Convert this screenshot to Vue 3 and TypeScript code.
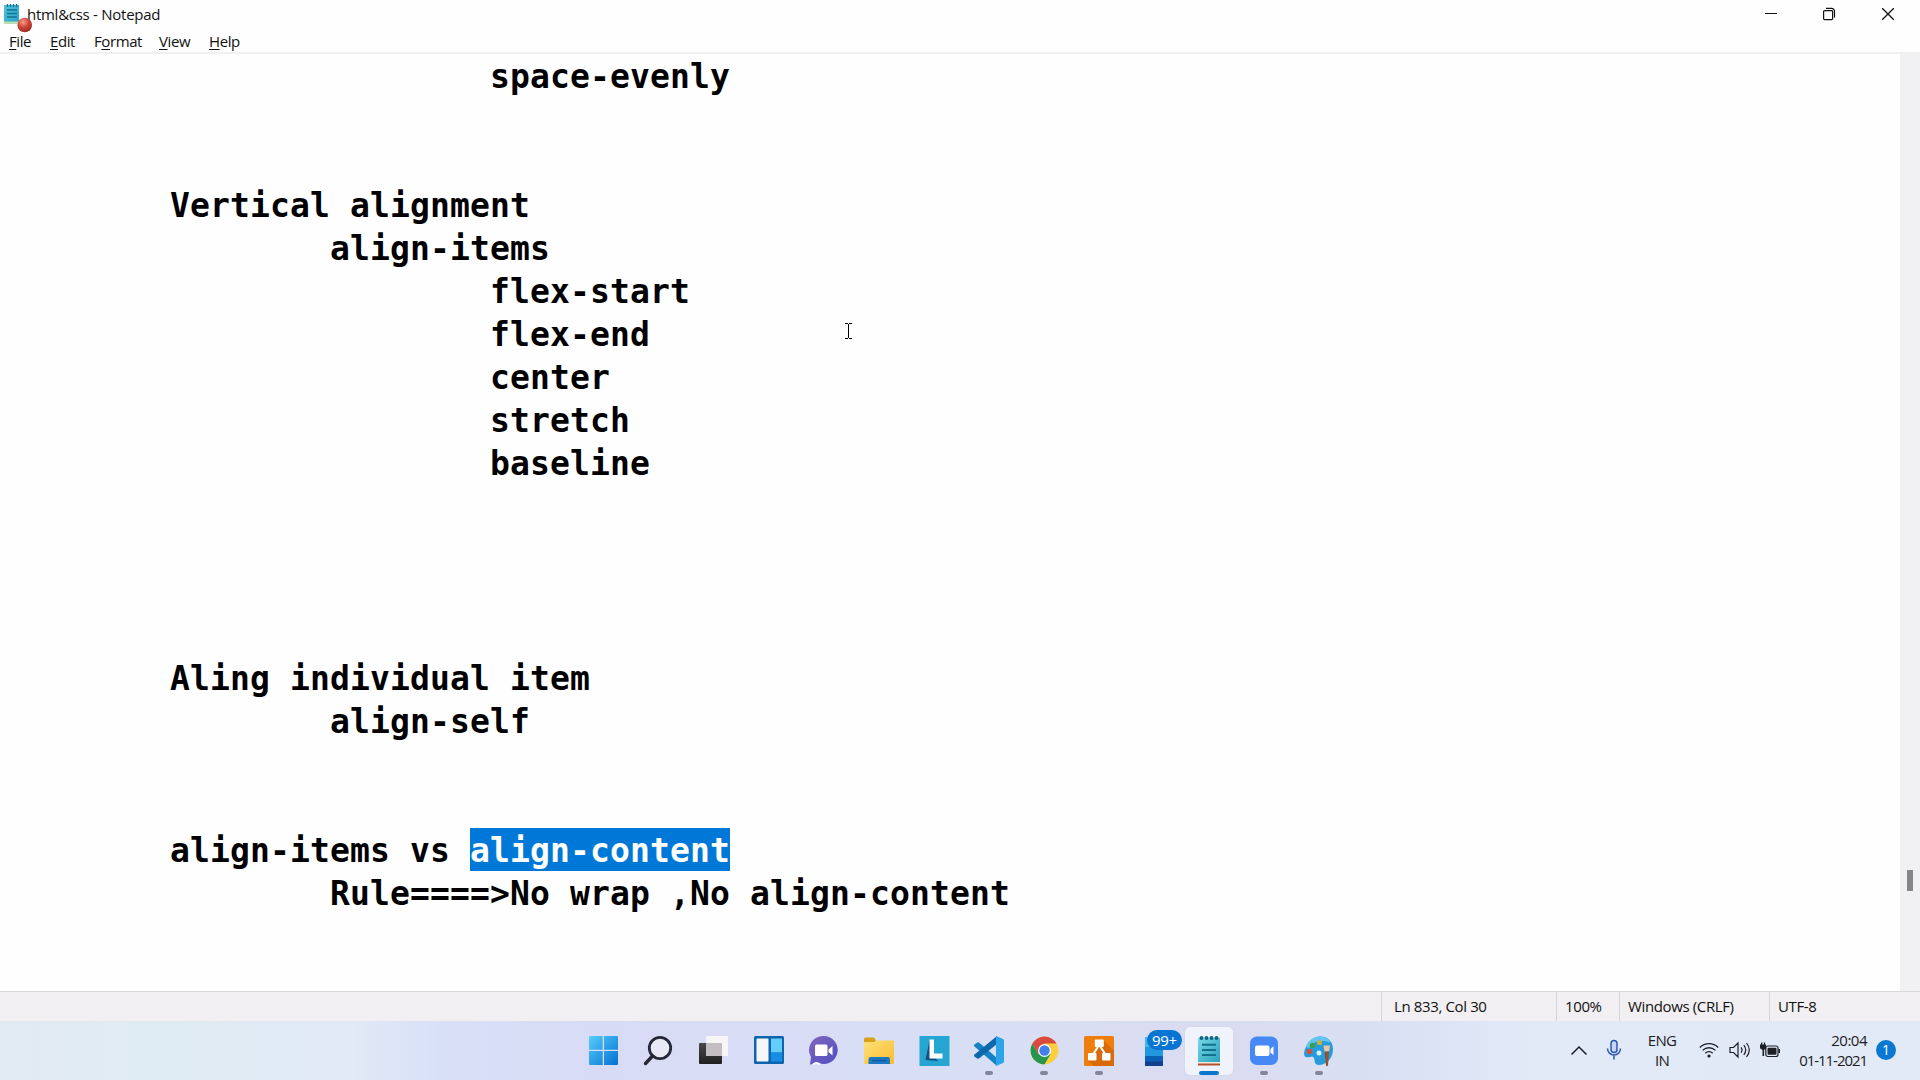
<script setup lang="ts">
interface MenuEntry { key: string; rest: string; pre?: string; width: number }
interface Line { tabs: number; text: string; selected?: string }

const menu: MenuEntry[] = [
  { key: 'F', rest: 'ile', width: 41 },
  { key: 'E', rest: 'dit', width: 44 },
  { pre: 'F', key: 'o', rest: 'rmat', width: 65 },
  { key: 'V', rest: 'iew', width: 50 },
  { key: 'H', rest: 'elp', width: 50 },
]

const blank: Line = { tabs: 0, text: '' }
const lines: Line[] = [
  { tabs: 3, text: 'space-evenly' },
  blank,
  blank,
  { tabs: 1, text: 'Vertical alignment' },
  { tabs: 2, text: 'align-items' },
  { tabs: 3, text: 'flex-start' },
  { tabs: 3, text: 'flex-end' },
  { tabs: 3, text: 'center' },
  { tabs: 3, text: 'stretch' },
  { tabs: 3, text: 'baseline' },
  blank,
  blank,
  blank,
  blank,
  { tabs: 1, text: 'Aling individual item' },
  { tabs: 2, text: 'align-self' },
  blank,
  blank,
  { tabs: 1, text: 'align-items vs ', selected: 'align-content' },
  { tabs: 2, text: 'Rule====>No wrap ,No align-content' },
]
const indent = (n: number) => '\t'.repeat(n)
</script>

<template>
  <div class="screen">
    <header class="titlebar">
      <svg class="app-icon" width="33" height="33" viewBox="0 0 33 33">
        <defs>
          <linearGradient id="pad" x1="0" y1="0" x2="1" y2="1">
            <stop offset="0" stop-color="#4fc0dc" /><stop offset="1" stop-color="#2ba3c6" />
          </linearGradient>
          <radialGradient id="ball" cx=".4" cy=".3" r=".7">
            <stop offset="0" stop-color="#f6a08e" /><stop offset=".5" stop-color="#d4493a" /><stop offset="1" stop-color="#9c2c22" />
          </radialGradient>
        </defs>
        <rect x="4" y="5" width="15" height="19" fill="url(#pad)" />
        <rect x="4" y="21.500" width="15" height="2.500" fill="#b9dfb0" />
        <path d="M7.500 4v3M10.500 4v3M13.500 4v3M16.500 4v3" stroke="#176f8b" stroke-width="1.300" />
        <path d="M7 10h10M7 13.500h10M7 17h10" stroke="#12738f" stroke-width="1.400" />
        <circle cx="24.700" cy="25" r="7.300" fill="url(#ball)" />
      </svg>
      <span class="title">html&amp;css - Notepad</span>
      <div class="controls">
        <svg width="14" height="14" viewBox="0 0 14 14"><path d="M2 6.500h12" stroke="#111" stroke-width="1" /></svg>
        <svg width="14" height="14" viewBox="0 0 14 14" fill="none" stroke="#111" stroke-width="1.200"><rect x="1.600" y="3.600" width="9" height="9" rx="1" /><path d="M4 1.400h5.500a3 3 0 0 1 3 3V10.500" /></svg>
        <svg width="14" height="14" viewBox="0 0 14 14"><path d="M1.200 1.200l11.600 11.600M12.800 1.200L1.200 12.800" stroke="#111" stroke-width="1.300" /></svg>
      </div>
    </header>
    <nav class="menubar">
      <span v-for="m in menu" :key="m.key" class="menu-item" :style="{ width: m.width + 'px' }">{{ m.pre }}<u>{{ m.key }}</u>{{ m.rest }}</span>
    </nav>
    <main class="editor">
      <div class="text">
        <div v-for="(l, i) in lines" :key="i" class="line">{{ indent(l.tabs) }}{{ l.text }}<span v-if="l.selected" class="selected">{{ l.selected }}</span></div>
      </div>
      <div class="scrollbar"><i class="thumb"></i></div>
      <svg class="caret" width="14" height="18" viewBox="0 0 14 18" shape-rendering="crispEdges"><path d="M3 1.500h3M7 1.500h3M6.500 2v14M3 16.500h3M7 16.500h3" fill="none" stroke="#000" stroke-width="1" /></svg>
    </main>
    <footer class="statusbar">
      <span class="cell position">Ln 833, Col 30</span>
      <span class="cell zoom">100%</span>
      <span class="cell eol">Windows (CRLF)</span>
      <span class="cell encoding">UTF-8</span>
    </footer>
    <div class="taskbar">
      <div class="apps">
        <div class="app">
          <svg viewBox="0 0 55 58"><defs><linearGradient id="win" x1="0" y1="0" x2="1" y2="1"><stop offset="0" stop-color="#56cdfb" /><stop offset="1" stop-color="#0471d2" /></linearGradient></defs>
            <path d="M14 15h12.700v13.700H13V16q0-1 1-1zM28 15h13q1 0 1 1v12.700H28zM13 30h13.700v14H14q-1 0-1-1zM28 30h14v13q0 1-1 1H28z" fill="url(#win)" /></svg>
        </div>
        <div class="app">
          <svg viewBox="0 0 55 58"><circle cx="29" cy="27" r="10.700" fill="#e8e9f5" stroke="#252936" stroke-width="2.800" /><path d="M21.500 35L14.500 42.500" stroke="#252936" stroke-width="3.400" stroke-linecap="round" /></svg>
        </div>
        <div class="app">
          <svg viewBox="0 0 55 58"><defs><linearGradient id="tv" x1="0" y1="0" x2="0" y2="1"><stop offset="0" stop-color="#484848" /><stop offset="1" stop-color="#202020" /></linearGradient></defs>
            <rect x="13" y="22" width="23" height="21" rx="1" fill="url(#tv)" /><rect x="20" y="15" width="22" height="20" rx="1" fill="#f7f5f5" /><path d="M20 22h16v13H20z" fill="#c4bdc2" /></svg>
        </div>
        <div class="app">
          <svg viewBox="0 0 55 58"><rect x="13" y="15" width="30" height="28" rx="1.500" fill="#0e65ae" /><rect x="15.500" y="17.500" width="12" height="23" rx="1" fill="#f5f6f8" /><rect x="30" y="17.500" width="11" height="14" fill="#65cdf9" /><rect x="30" y="31.500" width="11" height="9" fill="#168ee4" /></svg>
        </div>
        <div class="app">
          <svg viewBox="0 0 55 58"><defs><linearGradient id="chat" x1="0" y1="0" x2="1" y2="1"><stop offset="0" stop-color="#8367bd" /><stop offset="1" stop-color="#4c4fc0" /></linearGradient></defs>
            <path d="M27.500 15a14 14 0 1 1-5 27l-8.500 1.500L15 36A14 14 0 0 1 27.500 15z" fill="url(#chat)" /><rect x="19" y="23.500" width="12.500" height="11.500" rx="1.500" fill="#fff" /><path d="M32.500 28.500l4-3.500v9.500l-4-3.500z" fill="#fff" /><path d="M17 43.500q3.500-3 7 0" stroke="#fff" stroke-width="1.800" fill="none" /></svg>
        </div>
        <div class="app">
          <svg viewBox="0 0 55 58"><defs><linearGradient id="fold" x1="0" y1="0" x2="1" y2="1"><stop offset="0" stop-color="#ffe07a" /><stop offset="1" stop-color="#f7bd2e" /></linearGradient></defs>
            <path d="M13 18q0-1.500 1.500-1.500H23l2 3v6H13z" fill="#d9a116" /><path d="M13 21h10l2-1.500h18V42q0 1-1 1H14q-1 0-1-1z" fill="url(#fold)" /><path d="M17.500 43v-5q0-2 2-2H37q2 0 2 2v5z" fill="#1c78c2" /><path d="M21 39.500h14.500" stroke="#125a9a" stroke-width="1.500" /></svg>
        </div>
        <div class="app">
          <svg viewBox="0 0 55 58"><rect x="12.500" y="15" width="30" height="30" fill="#25a5d1" /><path d="M22.500 19l-4 20 13 1-5-4z" fill="#165083" /><path d="M22.500 18.500h4.500v14h8.500v5H22.500z" fill="#fff" /></svg>
        </div>
        <div class="app running">
          <svg viewBox="0 0 55 58"><path d="M12.300 23.500l3-2q1-.5 2 .3L35 37v8L12.500 25.500q-1-1-.2-2z" fill="#1382c6" /><path d="M12.300 35.500l3 2q1 .5 2-.3L35 23v-8L12.500 33.500q-1 1-.2 2z" fill="#0b69ad" /><path d="M34 15l7 3q1 .5 1 1.500v21q0 1-1 1.500l-7 3z" fill="#2da4ea" /></svg>
        </div>
        <div class="app running">
          <svg viewBox="0 0 55 58"><circle cx="27.500" cy="29.500" r="13.800" fill="#fbcf3d" /><path d="M15.400 22.500A14 14 0 0 1 39.600 22.500H27.500L21.400 33z" fill="#db4a3e" /><path d="M15.400 22.500A14 14 0 0 0 27.500 43.500L33.600 33h-12.200z" fill="#27954e" /><circle cx="27.500" cy="29.500" r="6.500" fill="#fff" /><circle cx="27.500" cy="29.500" r="5.200" fill="#4280ed" /></svg>
        </div>
        <div class="app running">
          <svg viewBox="0 0 55 58"><rect x="12" y="15" width="30" height="30" rx="1.500" fill="#ee7d0c" /><path d="M31 19l11 11v15H22l-6-5z" fill="#d96a0a" /><path d="M26.500 25L20 35M28 25l6.500 10" stroke="#fff" stroke-width="2" /><rect x="22.800" y="18.500" width="9" height="7.500" rx="1" fill="#fff" /><rect x="16" y="32" width="8.500" height="7.500" rx="1" fill="#fff" /><rect x="30" y="32" width="8.500" height="7.500" rx="1" fill="#fff" /></svg>
        </div>
        <div class="app">
          <svg viewBox="0 0 55 58"><rect x="18" y="16" width="18" height="12" fill="#42b5ea" /><rect x="18" y="26" width="18" height="9.500" fill="#2197df" /><rect x="18" y="35" width="18" height="6" fill="#0c60b3" /><rect x="18" y="40.500" width="18" height="4.500" fill="#123f8e" /></svg>
          <span class="badge">99+</span>
        </div>
        <div class="app running active">
          <svg viewBox="0 0 55 58"><defs><linearGradient id="np" x1="0" y1="0" x2="1" y2="1"><stop offset="0" stop-color="#78d8e8" /><stop offset="1" stop-color="#2aa0bb" /></linearGradient></defs>
            <rect x="16" y="16.500" width="22" height="25" rx="1" fill="url(#np)" /><path d="M16 41h22v1.500H16z" fill="#f1e8d8" /><path d="M16 42.500h22v2H16z" fill="#b5512d" /><g fill="#12667f"><circle cx="19.500" cy="17" r="1.900" /><circle cx="24.500" cy="17" r="1.900" /><circle cx="29.500" cy="17" r="1.900" /><circle cx="34.500" cy="17" r="1.900" /></g><path d="M20 23.800h14M20 28.900h14M20 34h14" stroke="#14718a" stroke-width="2" /></svg>
        </div>
        <div class="app running">
          <svg viewBox="0 0 55 58"><rect x="13" y="15.500" width="28" height="28.500" rx="7" fill="#4688f4" /><rect x="18" y="24.500" width="14.500" height="10.500" rx="2" fill="#fff" /><path d="M33.500 28l3-2.700v9l-3-2.700z" fill="#fff" /></svg>
        </div>
        <div class="app running">
          <svg viewBox="0 0 55 58"><path d="M28 15.500c9 0 13 6 13 13 0 9-7 15.500-14 15.500-5 0-4-4-5-7s-5 0-8-1-2-6 0-10 7-10.500 14-10.500z" fill="#279bdc" /><path d="M28 15.500c-8 0-13 6-14 10l3 2C21 19.500 29 18.500 39 21.500c-2-4-6-6-11-6z" fill="#62c5ef" /><circle cx="20.500" cy="24.500" r="2.800" fill="#35a04d" /><circle cx="27.500" cy="21.500" r="2.600" fill="#c7b13c" /><circle cx="17.500" cy="30.500" r="2.800" fill="#cf523d" /><circle cx="27" cy="32" r="2.500" fill="#dff1fb" /><path d="M31.500 24.500H38l-1 6h-4.500z" fill="#ecc7a0" /><path d="M32.500 30.500H37l-1 14q-1 1.500-2 0z" fill="#94532e" /></svg>
        </div>
      </div>
      <div class="tray">
        <svg class="chev" width="18" height="11" viewBox="0 0 18 11"><path d="M1.500 9.500L9 2l7.500 7.500" fill="none" stroke="#1d1f26" stroke-width="1.500" /></svg>
        <svg class="mic" width="16" height="22" viewBox="0 0 16 22" fill="none" stroke="#2f58ac" stroke-width="1.500"><rect x="5" y="1.500" width="6" height="12" rx="3" fill="#c5d8f3" /><path d="M1.500 9.500a6.500 6.500 0 0 0 13 0M8 16v4.500" /></svg>
        <div class="lang"><span>ENG</span><span>IN</span></div>
        <svg class="wifi" width="20" height="18" viewBox="0 0 20 18" fill="none" stroke="#1d1f26" stroke-width="1.300"><path d="M.8 6.500a13 13 0 0 1 18.400 0M3.600 9.400a9 9 0 0 1 12.800 0M6.300 12.200a5.200 5.200 0 0 1 7.400 0" /><circle cx="10" cy="15" r="1.600" fill="#1d1f26" stroke="none" /></svg>
        <svg class="vol" width="22" height="18" viewBox="0 0 22 18" fill="none" stroke="#1d1f26" stroke-width="1.200"><path d="M1 6.500h3.500L9 2v14l-4.500-4.500H1zM12 6.300q2 2.700 0 5.400M14.800 4.200q3.800 4.800 0 9.600M17.500 2q5.600 7 0 14" /></svg>
        <svg class="batt" width="20" height="16" viewBox="0 0 20 16"><rect x="5.800" y="4" width="12.200" height="10.500" rx="2" fill="none" stroke="#1d1f26" stroke-width="1.200" /><rect x="7.500" y="5.800" width="9" height="7" rx="1" fill="#1d1f26" /><path d="M18.500 7h1.500v4h-1.500zM0 2.500h1V.5h1.300v2h1.500v-2h1.300v2h1v3q0 2-2 2.300V14H2.500V7.800Q0 7.500 0 5.500z" fill="#1d1f26" /></svg>
        <div class="clock"><span class="time">20:04</span><span class="date">01-11-2021</span></div>
        <span class="notif">1</span>
      </div>
    </div>
  </div>
</template>

<style>
body { margin: 0; overflow: hidden; }
</style>

<style scoped>
.screen { width: 1920px; height: 1080px; display: flex; flex-direction: column; background: #fefefe; font-family: "Open Sans", "Noto Sans", sans-serif; color: #111; overflow: hidden; }
.titlebar { height: 30px; display: flex; flex: none; }
.app-icon { flex: none; position: relative; z-index: 2; width: 33px; height: 33px; margin-right: -6px; }
.title { font-size: 15px; line-height: 29px; letter-spacing: -0.27px; white-space: nowrap; }
.controls { margin-left: auto; display: flex; gap: 45px; padding: 7px 25px 0 0; }
.menubar { height: 22px; flex: none; display: flex; padding-left: 9px; border-bottom: 2px solid #f0f0f1; font-size: 15px; line-height: 23px; letter-spacing: -0.4px; white-space: nowrap; }
.menu-item { flex: none; }
.menu-item u { text-underline-offset: 2px; text-decoration-thickness: 1px; text-decoration-skip-ink: none; }
.editor { height: 937px; flex: none; display: flex; position: relative; }
.text { flex: 1; padding-left: 10px; overflow: hidden; }
.line { height: 43px; line-height: 46px; font-family: "DejaVu Sans Mono", "Liberation Mono", monospace; font-weight: 700; font-size: 33px; letter-spacing: 0.133px; tab-size: 160px; white-space: pre; color: #000; }
.selected { display: inline-block; height: 43px; vertical-align: top; background: #0078d7; color: #fff; }
.scrollbar { width: 20px; background: #f1f0f3; padding-top: 816px; box-sizing: border-box; }
.thumb { display: block; width: 6px; height: 21px; margin-left: 7px; background: #868588; }
.caret { position: absolute; left: 842px; top: 268px; }
.statusbar { height: 30px; flex: none; display: flex; justify-content: flex-end; background: #f1eff1; border-top: 1px solid #d8d7da; box-sizing: border-box; font-size: 15px; line-height: 29px; letter-spacing: -0.37px; white-space: nowrap; }
.cell { border-left: 1px solid #d5d4d7; box-sizing: border-box; flex: none; }
.position { width: 175px; padding-left: 12px; }
.zoom { width: 63px; padding-left: 8px; }
.eol { width: 150px; padding-left: 8px; }
.encoding { width: 151px; padding-left: 8px; }
.taskbar { flex: 1; display: flex; background: linear-gradient(90deg, #e2eaf4 0, #e0ecf4 8%, #e1eaf5 18%, #d8e0f8 23%, #d8dbf5 31%, #d8dff5 50%, #dadcf0 63%, #d9e0f3 72%, #e2e9f7 80%, #e2eaf6 100%); }
.apps { display: flex; padding-left: 576px; }
.app { width: 55.1px; height: 58px; position: relative; flex: none; display: flex; }
.app svg { width: 55px; height: 58px; position: relative; }
.running::after { content: ""; position: absolute; left: 23px; top: 50px; width: 8px; height: 4px; border-radius: 2px; background: #83869a; }
.active::before { content: ""; position: absolute; left: 3px; top: 6px; width: 48px; height: 48px; border-radius: 5px; background: #f0f3fc; box-shadow: 0 0 1px #b8bdd0; }
.active::after { left: 17px; width: 20px; background: #0b78d0; }
.badge { position: absolute; left: 20px; top: 9px; width: 35px; height: 20px; border-radius: 10px; background: #0875d2; color: #fff; font-size: 15px; letter-spacing: -0.3px; line-height: 20px; text-align: center; }
.tray { margin-left: auto; display: flex; align-items: center; height: 58px; padding-right: 24px; font-size: 15px; color: #1b1c22; }
.tray svg { flex: none; }
.lang, .clock { display: flex; flex-direction: column; line-height: 20px; }
.chev { margin-right: 18px; }
.mic { margin-right: 23px; }
.lang { width: 34px; align-items: center; letter-spacing: -0.7px; margin-right: 20px; }
.wifi { margin-right: 10px; }
.vol { margin-right: 9px; }
.clock { align-items: flex-end; width: 68px; margin: 0 9px 0 19px; white-space: nowrap; }
.time { letter-spacing: -0.5px; }
.date { letter-spacing: -1.05px; }
.notif { width: 20px; height: 20px; border-radius: 50%; background: #0a78d2; color: #fff; font-size: 14px; line-height: 20px; text-align: center; }
</style>
